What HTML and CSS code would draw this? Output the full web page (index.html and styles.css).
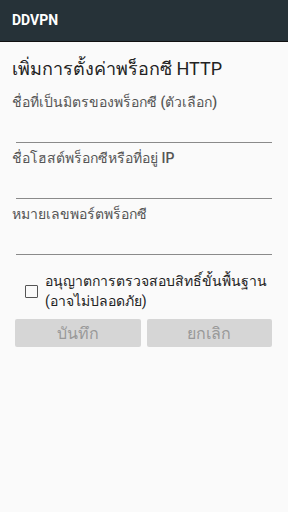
FILE: index.html
```html
<!DOCTYPE html>
<html lang="th">
<head>
  <meta charset="UTF-8" />
  <title>DDVPN</title>
  <meta name="viewport" content="width=device-width, initial-scale=1" />
  <link rel="stylesheet" href="styles.css">
</head>
<body>

  <!-- APP BAR -->
  <div class="appbar">DDVPN</div>

  <div class="content">
    <h1>เพิ่มการตั้งค่าพร็อกซี HTTP</h1>

    <div class="field first">
      <label>ชื่อที่เป็นมิตรของพร็อกซี (ตัวเลือก)</label>
      <div class="line"></div>
    </div>

    <div class="field">
      <label>ชื่อโฮสต์พร็อกซีหรือที่อยู่ IP</label>
      <div class="line"></div>
    </div>

    <div class="field">
      <label>หมายเลขพอร์ตพร็อกซี</label>
      <div class="line"></div>
    </div>

    <!-- CHECKBOX -->
    <div class="check">
      <span class="box"></span>
      <span class="check-text">อนุญาตการตรวจสอบสิทธิ์ขั้นพื้นฐาน<br>(อาจไม่ปลอดภัย)</span>
    </div>

    <!-- BUTTONS -->
    <div class="buttons">
      <button>บันทึก</button>
      <button>ยกเลิก</button>
    </div>
  </div>

</body>
</html>
```

FILE: styles.css
```css
body {
  margin: 0;
  background-color: #fafafa;
  font-family: Roboto, "Noto Sans", sans-serif;
  color: #222;
}

.appbar {
  height: 41px;
  line-height: 40px;
  padding-left: 12px;
  background-color: #263238;
  border-bottom: 1px solid #111;
  color: #fff;
  font-size: 14px;
  font-weight: bold;
}

.content {
  padding: 0 12px;
}

h1 {
  margin: 16px 0 0;
  font-size: 18px;
  font-weight: normal;
  line-height: 22px;
}

.field {
  padding-top: 5px;
}

.field.first {
  padding-top: 12px;
}

.field label {
  display: block;
  font-size: 14px;
  font-weight: 500;
  color: #555;
  line-height: 20px;
}

.line {
  margin: 30px 4px 0;
  height: 1px;
  background-color: #8a8a8a;
}

.check {
  display: flex;
  align-items: center;
  margin-top: 16px;
  padding-left: 13px;
}

.box {
  width: 11px;
  height: 11px;
  border: 1px solid #555;
  border-radius: 1px;
  margin-right: 7px;
  flex-shrink: 0;
}

.check-text {
  font-size: 14px;
  line-height: 20px;
}

.buttons {
  display: flex;
  gap: 6px;
  margin: 8px 4px 0 3px;
}

.buttons button {
  flex: 1;
  height: 28px;
  border: none;
  border-radius: 2px;
  background-color: #d6d6d6;
  color: #999;
  font-family: inherit;
  font-size: 16px;
}
```
